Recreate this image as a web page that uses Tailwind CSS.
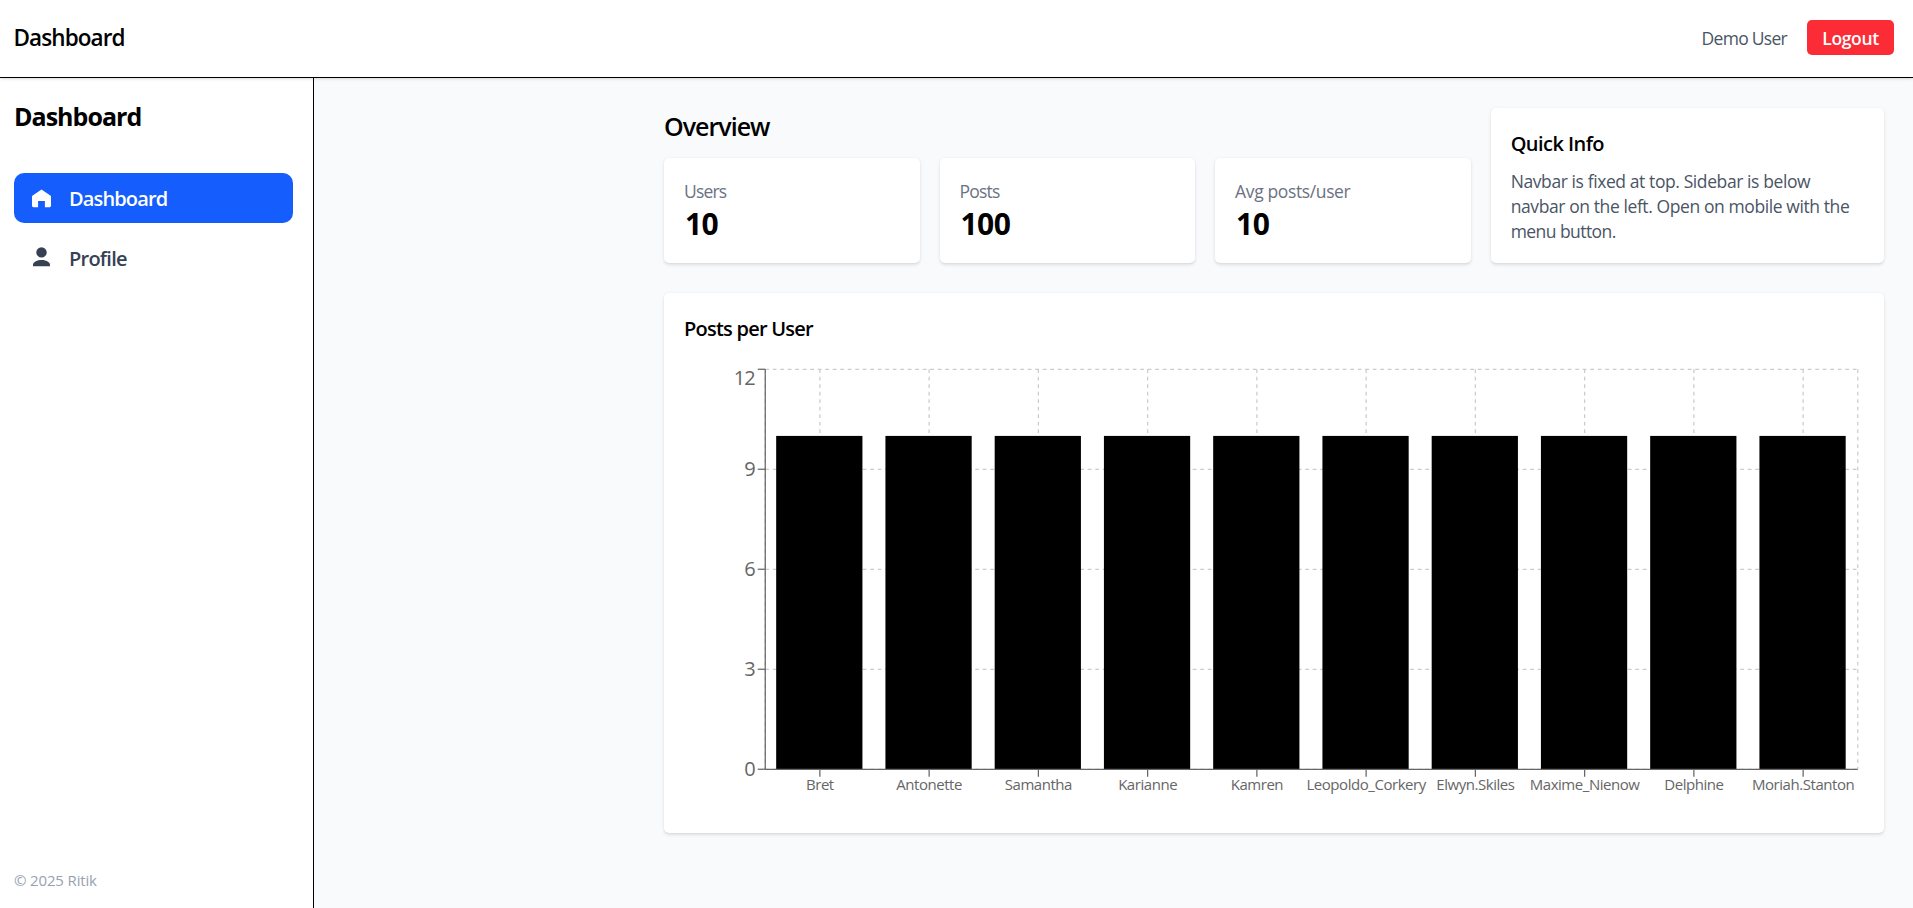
<!DOCTYPE html>
<html lang="en">
<head>
<meta charset="utf-8">
<title>Dashboard</title>
<script src="https://cdn.jsdelivr.net/npm/@tailwindcss/browser@4"></script>
</head>
<body class="flex h-screen flex-col overflow-hidden bg-gray-50 font-['Segoe_UI','Open_Sans',sans-serif] text-black">
  <header class="z-10 flex h-[78px] shrink-0 items-center justify-between border-b border-black bg-white pr-[19px] pb-0.5 pl-[13.5px] shadow-[0_1.25px_3.75px_rgba(0,0,0,0.1),0_1.25px_2.5px_-1.25px_rgba(0,0,0,0.1)]">
    <h1 class="text-[22.5px] leading-[35px] font-semibold tracking-[-0.0405em]">Dashboard</h1>
    <div class="flex items-center gap-5">
      <span class="pt-0.5 text-[17.5px] leading-[25px] tracking-[-0.041em] text-gray-600">Demo User</span>
      <button class="h-[35px] w-[87px] rounded-[5px] bg-[#fb2c36] pt-px text-[17.5px] leading-[25px] font-semibold tracking-[-0.0193em] text-white">Logout</button>
    </div>
  </header>
  <div class="flex min-h-0 flex-1">
    <aside class="flex w-[314px] shrink-0 flex-col border-r border-black bg-white pr-5 pl-3.5">
      <h2 class="mt-[21px] text-[25px] leading-[35px] font-bold tracking-[-0.0391em]">Dashboard</h2>
      <nav class="mt-[39px] flex flex-col gap-2.5">
        <a class="flex h-[50px] items-center gap-[15px] rounded-[10px] bg-[#155dfc] px-[15px] text-[20px] leading-[30px] font-semibold tracking-[-0.0432em] text-white">
          <svg class="size-[25px]" viewBox="0 0 25 25" fill="currentColor"><path d="M12.5 3.5 L3.7 9.4 Q3 9.9 3 10.7 V19.8 Q3 21.2 4.4 21.2 H9.1 V15 H15.9 V21.2 H20.6 Q22 21.2 22 19.8 V10.7 Q22 9.9 21.3 9.4 Z"/></svg>
          <span class="pt-0.5">Dashboard</span>
        </a>
        <a class="flex h-[50px] items-center gap-[15px] rounded-[10px] px-[15px] text-[20px] leading-[30px] font-semibold tracking-[-0.0377em] text-[#364153]">
          <svg class="size-[25px]" viewBox="0 0 25 25" fill="currentColor"><circle cx="12.5" cy="6.4" r="5.2"/><path d="M4 20.2 V18.8 C4 15.6 8.6 13.9 12.5 13.9 S21 15.6 21 18.8 V20.2 Z"/></svg>
          <span class="pt-0.5">Profile</span>
        </a>
      </nav>
      <p class="mt-auto mb-[18px] text-[15px] leading-5 tracking-[-0.01em] text-[#99a1af]">© 2025 Ritik</p>
    </aside>
    <main class="min-w-0 flex-1 pt-[29.5px] pr-[29px] pl-[350px]">
      <div class="grid grid-cols-3 gap-x-5 gap-y-[30px]">
        <section class="col-span-2">
          <h2 class="mb-[14px] pt-px text-[25px] leading-[35px] font-semibold tracking-[-0.0395em]">Overview</h2>
          <div class="grid grid-cols-3 gap-5">
            <div class="rounded-[5px] bg-white px-5 pt-[21px] pb-[19px] shadow-[0_1.25px_3.75px_rgba(0,0,0,0.1),0_1.25px_2.5px_-1.25px_rgba(0,0,0,0.1)]">
              <p class="text-[17.5px] leading-[25px] tracking-[-0.048em] text-[#6a7282]">Users</p>
              <p class="pl-px text-[30px] leading-10 font-bold tracking-[-0.02em]">10</p>
            </div>
            <div class="rounded-[5px] bg-white px-5 pt-[21px] pb-[19px] shadow-[0_1.25px_3.75px_rgba(0,0,0,0.1),0_1.25px_2.5px_-1.25px_rgba(0,0,0,0.1)]">
              <p class="text-[17.5px] leading-[25px] tracking-[-0.045em] text-[#6a7282]">Posts</p>
              <p class="pl-px text-[30px] leading-10 font-bold tracking-[-0.02em]">100</p>
            </div>
            <div class="rounded-[5px] bg-white px-5 pt-[21px] pb-[19px] shadow-[0_1.25px_3.75px_rgba(0,0,0,0.1),0_1.25px_2.5px_-1.25px_rgba(0,0,0,0.1)]">
              <p class="text-[17.5px] leading-[25px] tracking-[-0.0214em] text-[#6a7282]">Avg posts/user</p>
              <p class="pl-px text-[30px] leading-10 font-bold tracking-[-0.02em]">10</p>
            </div>
          </div>
        </section>
        <section class="rounded-[5px] bg-white px-5 pt-[21px] pb-[19px] shadow-[0_1.25px_3.75px_rgba(0,0,0,0.1),0_1.25px_2.5px_-1.25px_rgba(0,0,0,0.1)]">
          <h3 class="mb-2.5 text-[20px] leading-[30px] font-semibold tracking-[-0.0275em]">Quick Info</h3>
          <p class="text-[17.5px] leading-[25px] tracking-[-0.0232em] text-[#4a5565]">Navbar is fixed at top. Sidebar is below<br>navbar on the left. Open on mobile with the<br><span class="tracking-[-0.032em]">menu button.</span></p>
        </section>
        <section class="col-span-3 rounded-[5px] bg-white px-5 pt-[21px] pb-5 shadow-[0_1.25px_3.75px_rgba(0,0,0,0.1),0_1.25px_2.5px_-1.25px_rgba(0,0,0,0.1)]">
          <h3 class="mb-[19px] text-[20px] leading-[30px] font-semibold tracking-[-0.0384em]">Posts per User</h3>
          <svg id="chart" class="block h-[450px] w-[1180px]" viewBox="0 0 944 360">
            <g id="grid" stroke="#ccc" stroke-dasharray="3 3"></g>
            <g id="bars" fill="#000"></g>
            <g id="axes" stroke="#666"></g>
            <g id="names" class="text-[12px] tracking-[-0.03em]" fill="#666" text-anchor="middle"></g>
            <g id="values" class="text-[16px] tracking-[-0.05em]" fill="#666" text-anchor="end"></g>
          </svg>
        </section>
      </div>
    </main>
  </div>
  <script>
    const data = [["Bret",10],["Antonette",10],["Samantha",10],["Karianne",10],["Kamren",10],["Leopoldo_Corkery",10],["Elwyn.Skiles",10],["Maxime_Nienow",10],["Delphine",10],["Moriah.Stanton",10]];
    const left = 65, right = 939, top_ = 5, bottom = 325, max = 12;
    const band = (right - left) / data.length;
    const y = v => bottom - (v / max) * (bottom - top_);
    const line = (x1, y1, x2, y2) => `<line x1="${x1}" y1="${y1}" x2="${x2}" y2="${y2}"/>`;
    let grid = line(left, top_, left, bottom) + line(right, top_, right, bottom);
    let axes = line(left, top_, left, bottom) + line(left, bottom, right, bottom);
    let bars = "", names = "", values = "";
    for (const v of [0, 3, 6, 9, 12]) {
      grid += line(left, y(v), right, y(v));
      axes += line(left - 6, y(v), left, y(v));
      values += `<text x="56.5" y="${(v === max ? y(v) + 7 : y(v)) + 5.7}">${v}</text>`;
    }
    data.forEach(([name, count], i) => {
      const c = left + band * (i + 0.5);
      grid += line(c, top_, c, bottom);
      axes += line(c, bottom, c, bottom + 6);
      bars += `<rect x="${left + band * (i + 0.1)}" y="${y(count)}" width="69" height="${bottom - y(count)}"/>`;
      names += `<text x="${c}" y="${bottom + 16.5}">${name}</text>`;
    });
    document.getElementById("grid").innerHTML = grid;
    document.getElementById("bars").innerHTML = bars;
    document.getElementById("axes").innerHTML = axes;
    document.getElementById("names").innerHTML = names;
    document.getElementById("values").innerHTML = values;
  </script>
</body>
</html>
